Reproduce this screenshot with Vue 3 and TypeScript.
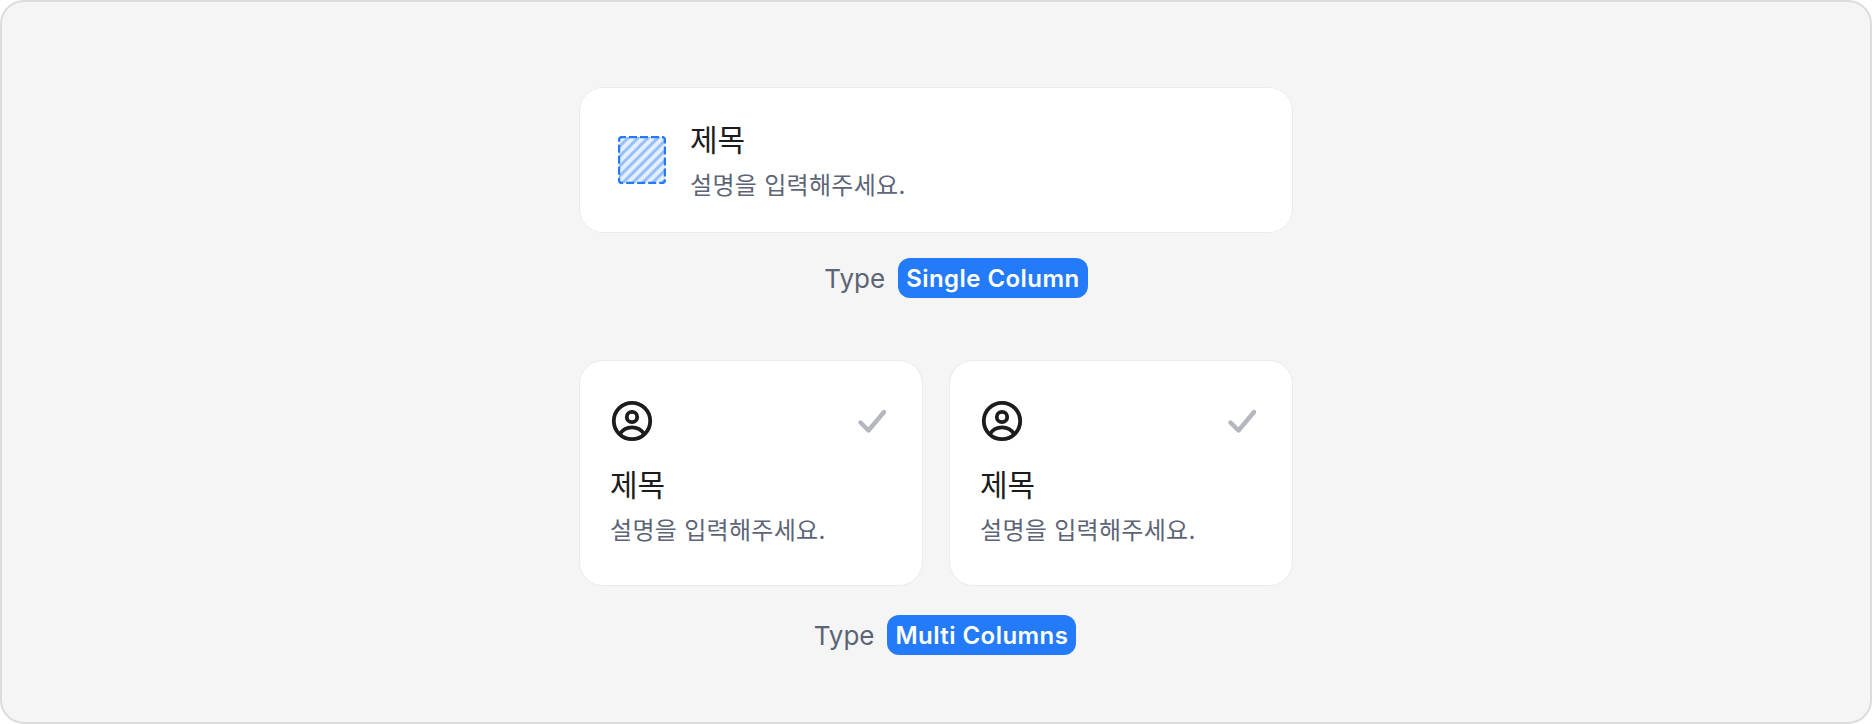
<template>
  <div class="page">
    <section class="variant">
      <div class="card single">
        <svg class="slot" viewBox="0 0 48 48">
          <defs>
            <pattern id="stripes" width="7" height="7" patternUnits="userSpaceOnUse" patternTransform="rotate(45)">
              <rect width="7" height="7" fill="#e3eefe" />
              <rect width="3" height="7" fill="#97c0fb" />
            </pattern>
          </defs>
          <rect x="1" y="1" width="46" height="46" rx="3" fill="url(#stripes)" stroke="#247bfa" stroke-width="2.400" stroke-dasharray="8 3" stroke-dashoffset="4" />
        </svg>
        <div class="texts">
          <div class="title">제목</div>
          <div class="desc">설명을 입력해주세요.</div>
        </div>
      </div>
      <div class="type-row first">
        <span class="type-label">Type</span>
        <span class="pill">Single Column</span>
      </div>
    </section>

    <section class="variant multi-variant">
      <div class="columns">
        <div v-for="n in 2" :key="n" class="card multi">
          <div class="card-top">
            <svg class="avatar" viewBox="0 0 44 44" fill="none" stroke="#1b1c1e" stroke-width="3.800">
              <circle cx="22" cy="22" r="18.200" />
              <circle cx="22" cy="18" r="5.200" />
              <path d="M9.500 35.500C12.500 30.500 17 28.300 22 28.300s9.500 2.200 12.500 7.200" />
            </svg>
            <svg class="check" viewBox="0 0 28 24" fill="none" stroke="#b5b7bf" stroke-width="4.400" stroke-linecap="round" stroke-linejoin="round">
              <path d="M2.500 13.500 10.500 21.500 26 3" />
            </svg>
          </div>
          <div class="texts">
            <div class="title">제목</div>
            <div class="desc">설명을 입력해주세요.</div>
          </div>
        </div>
      </div>
      <div class="type-row second">
        <span class="type-label">Type</span>
        <span class="pill">Multi Columns</span>
      </div>
    </section>
  </div>
</template>

<script setup lang="ts">
</script>

<style>
html,
body {
  margin: 0;
  background: #fff;
}
</style>

<style scoped>
.page {
  box-sizing: border-box;
  width: 1872px;
  height: 724px;
  padding-top: 85px;
  background: #f5f5f5;
  border: 2px solid #dcdcdc;
  border-radius: 24px;
  display: flex;
  flex-direction: column;
  align-items: center;
  font-family: Inter, "Noto Sans CJK KR", sans-serif;
}

.variant {
  width: 714px;
  display: flex;
  flex-direction: column;
  align-items: center;
}

.multi-variant {
  margin-top: 62px;
}

.card {
  box-sizing: border-box;
  background: #fff;
  border: 1px solid #ebebeb;
  border-radius: 24px;
}

.single {
  width: 100%;
  height: 146px;
  padding: 0 38px;
  display: flex;
  align-items: center;
  gap: 24px;
}

.single .texts {
  margin-top: 2px;
}

.slot {
  flex: none;
  width: 48px;
  height: 48px;
}

.texts {
  display: flex;
  flex-direction: column;
  gap: 11px;
}

.title {
  font-size: 30px;
  line-height: 38px;
  color: #1b1c1e;
}

.desc {
  font-size: 24px;
  line-height: 32px;
  letter-spacing: 0.3px;
  color: #5c6476;
}

.type-row {
  margin-top: 25px;
  height: 40px;
  display: flex;
  align-items: center;
  gap: 13px;
}

.type-row.first {
  margin-left: 40px;
}

.type-row.second {
  margin-top: 29px;
  margin-left: 18px;
}

.type-label {
  font-size: 26px;
  color: #5c6476;
}

.pill {
  height: 40px;
  padding: 0 8px;
  display: flex;
  align-items: center;
  border-radius: 12px;
  background: #247bfa;
  color: #fff;
  font-size: 24px;
  font-weight: 600;
  letter-spacing: 0.45px;
}

.columns {
  width: 100%;
  display: flex;
  gap: 26px;
}

.multi {
  flex: 1;
  height: 226px;
  padding: 38px 30px 0;
}

.card-top {
  display: flex;
  justify-content: space-between;
  align-items: center;
  margin-bottom: 23px;
}

.avatar {
  width: 44px;
  height: 44px;
}

.check {
  width: 28px;
  height: 24px;
  margin-right: 6px;
}
</style>
